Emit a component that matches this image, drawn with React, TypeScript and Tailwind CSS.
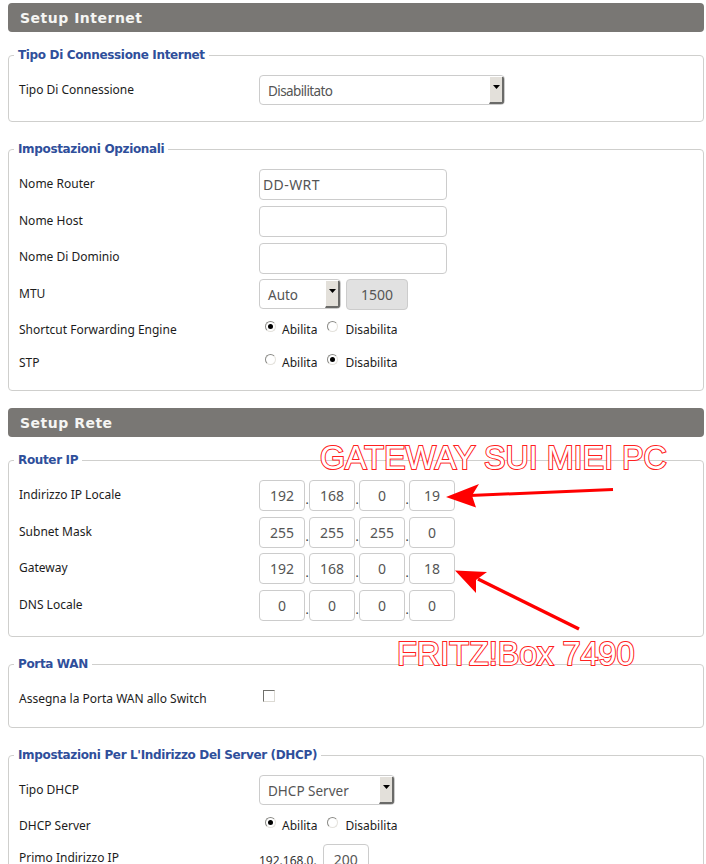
const ui = '"Noto Sans", "Liberation Sans", sans-serif';

function Header({ title }: { title: string }) {
  return (
    <div className="h-[29px] rounded-[4px] bg-[#797774] pl-3 text-[14px] leading-[30px] font-bold tracking-[0.5px] text-[#f5f5f3] [font-family:'DejaVu_Sans',sans-serif]">
      {title}
    </div>
  );
}

function Group({ legend, children, className }: { legend: string; children: React.ReactNode; className: string }) {
  return (
    <fieldset className={`rounded-[4px] border border-[#cfcfcd] px-[10px] ${className}`}>
      <legend className="-ml-[5px] h-0 px-[4px] -translate-y-[9px] text-[12px] leading-[16px] font-bold tracking-[-0.35px] whitespace-nowrap text-[#2f4f9b] [font-family:'DejaVu_Sans',sans-serif]">
        {legend}
      </legend>
      {children}
    </fieldset>
  );
}

function Row({ label, h, high = false, children }: { label: string; h: string; high?: boolean; children: React.ReactNode }) {
  return (
    <div className={`flex items-start ${h}`}>
      <div className={`w-[240px] shrink-0 text-[12px] leading-[17px] text-[#1c1c1c] ${high ? 'pt-[5px]' : 'pt-[6px]'}`}>{label}</div>
      {children}
    </div>
  );
}

function Field({ value = '', w = 'w-[188px]', center = false, disabled = false }: { value?: string; w?: string; center?: boolean; disabled?: boolean }) {
  return (
    <input
      readOnly
      value={value}
      className={`h-[31px] rounded-[4px] border border-[#cccccc] text-[14px] text-[#555] outline-none ${w} ${center ? 'text-center' : 'pl-[3px] tracking-[0.4px]'} ${disabled ? 'bg-[#e1e1e1]' : 'bg-white'}`}
    />
  );
}

function Select({ value, w, tight = false }: { value: string; w: string; tight?: boolean }) {
  return (
    <div className={`flex h-[30px] items-stretch overflow-hidden rounded-[4px] border border-[#cccccc] bg-white ${w}`}>
      <div className={`flex-1 pl-[8px] text-[13.5px] leading-[31px] whitespace-nowrap text-[#555] ${tight ? 'tracking-[-0.6px]' : ''}`}>{value}</div>
      <div className="flex w-[15px] items-center justify-center border-t border-r-2 border-b-2 border-l border-t-white border-r-[#6a6a68] border-b-[#6a6a68] border-l-white bg-[#e3e0da] pb-[6px]">
        <svg width="7" height="4" viewBox="0 0 7 4"><path d="M0 0h7L3.5 4z" fill="#000" /></svg>
      </div>
    </div>
  );
}

function Radio({ on }: { on?: boolean }) {
  return (
    <span className="relative -top-[3px] inline-flex h-[11px] w-[11px] items-center justify-center rounded-full border border-t-[#8a8a86] border-r-[#e4e2dc] border-b-[#e4e2dc] border-l-[#8a8a86] bg-white">
      {on && <span className="h-[5px] w-[5px] rounded-full bg-black" />}
    </span>
  );
}

function Radios({ on, low = false }: { on: 'a' | 'd'; low?: boolean }) {
  return (
    <div className={`flex items-center pl-[6px] text-[12px] leading-[17px] text-[#1c1c1c] ${low ? 'pt-[6px]' : 'pt-[5px]'}`}>
      <Radio on={on === 'a'} />
      <span className="ml-[6px]">Abilita</span>
      <span className="ml-[10px] inline-flex items-center"><Radio on={on === 'd'} /></span>
      <span className="ml-[7px]">Disabilita</span>
    </div>
  );
}

function Ip({ v }: { v: string[] }) {
  return (
    <div className="flex items-start">
      {v.map((x, i) => (
        <div key={i} className="flex items-start">
          <Field value={x} w="w-[46px]" center />
          {i < 3 && <span className="flex h-[31px] w-[4px] items-end justify-center pb-[4px] text-[12px] leading-[14px] text-[#333]">.</span>}
        </div>
      ))}
    </div>
  );
}

export default function App() {
  return (
    <div className="relative h-[864px] w-[706px] overflow-hidden bg-white pt-[3px] pr-[2px] pl-[8px]" style={{ fontFamily: ui }}>
      <Header title="Setup Internet" />
      <Group legend="Tipo Di Connessione Internet" className="mt-[23px] h-[67px] pt-[19px]">
        <Row label="Tipo Di Connessione" h="h-[31px]"><Select value="Disabilitato" w="w-[246px]" tight /></Row>
      </Group>
      <Group legend="Impostazioni Opzionali" className="mt-[27px] h-[242px] pt-[19px]">
        <Row label="Nome Router" h="h-[37px]"><Field value="DD-WRT" /></Row>
        <Row label="Nome Host" h="h-[37px]"><Field /></Row>
        <Row label="Nome Di Dominio" h="h-[36px]" high><Field /></Row>
        <Row label="MTU" h="h-[37px]">
          <Select value="Auto" w="w-[82px]" />
          <div className="ml-[5px]"><Field value="1500" w="w-[62px]" center disabled /></div>
        </Row>
        <Row label="Shortcut Forwarding Engine" h="h-[33px]" high><Radios on="a" /></Row>
        <Row label="STP" h="h-[33px]" high><Radios on="d" /></Row>
      </Group>
      <div className="mt-[17px]"><Header title="Setup Rete" /></div>
      <Group legend="Router IP" className="mt-[23px] h-[177px] pt-[19px]">
        <Row label="Indirizzo IP Locale" h="h-[37px]"><Ip v={['192', '168', '0', '19']} /></Row>
        <Row label="Subnet Mask" h="h-[36px]"><Ip v={['255', '255', '255', '0']} /></Row>
        <Row label="Gateway" h="h-[37px]"><Ip v={['192', '168', '0', '18']} /></Row>
        <Row label="DNS Locale" h="h-[36px]"><Ip v={['0', '0', '0', '0']} /></Row>
      </Group>
      <Group legend="Porta WAN" className="mt-[27px] h-[64px] pt-[19px]">
        <Row label="Assegna la Porta WAN allo Switch" h="h-[31px]">
          <span className="mt-[6px] ml-[4px] h-[12px] w-[12px] border border-t-[#70706c] border-r-[#dcdad4] border-b-[#dcdad4] border-l-[#70706c] bg-white" />
        </Row>
      </Group>
      <Group legend="Impostazioni Per L'Indirizzo Del Server (DHCP)" className="mt-[27px] h-[140px] pt-[19px]">
        <Row label="Tipo DHCP" h="h-[36px]"><Select value="DHCP Server" w="w-[136px]" /></Row>
        <Row label="DHCP Server" h="h-[33px]"><Radios on="a" low /></Row>
        <Row label="Primo Indirizzo IP" h="h-[36px]" high>
          <span className="pt-[8px] text-[12px] leading-[17px] text-[#333]">192.168.0.</span>
          <div className="ml-[6px]"><Field value="200" w="w-[46px]" center /></div>
        </Row>
      </Group>

      <svg className="absolute top-0 left-0" width="706" height="864" viewBox="0 0 706 864" fill="none">
        <path d="M613 489.5 L470 495.5" stroke="#ff0000" strokeWidth="3" />
        <path d="M446 497 L479 484 L472 495.5 L476 507.5 Z" fill="#ff0000" />
        <path d="M579 629 L478 579" stroke="#ff0000" strokeWidth="3.5" />
        <path d="M455 570.5 L487 572 L476 580 L476 593 Z" fill="#ff0000" />
      </svg>
      <div className="absolute top-[440px] left-[320px] text-[32.3px] leading-[36px] whitespace-nowrap text-white [-webkit-text-stroke:2px_#ff2020] [font-family:'Liberation_Sans',sans-serif] [paint-order:stroke_fill]">GATEWAY SUI MIEI PC</div>
      <div className="absolute top-[636px] left-[397px] text-[32.4px] leading-[36px] whitespace-nowrap text-white [-webkit-text-stroke:2px_#ff2020] [font-family:'Liberation_Sans',sans-serif] [paint-order:stroke_fill]">FRITZ!Box 7490</div>
    </div>
  );
}
